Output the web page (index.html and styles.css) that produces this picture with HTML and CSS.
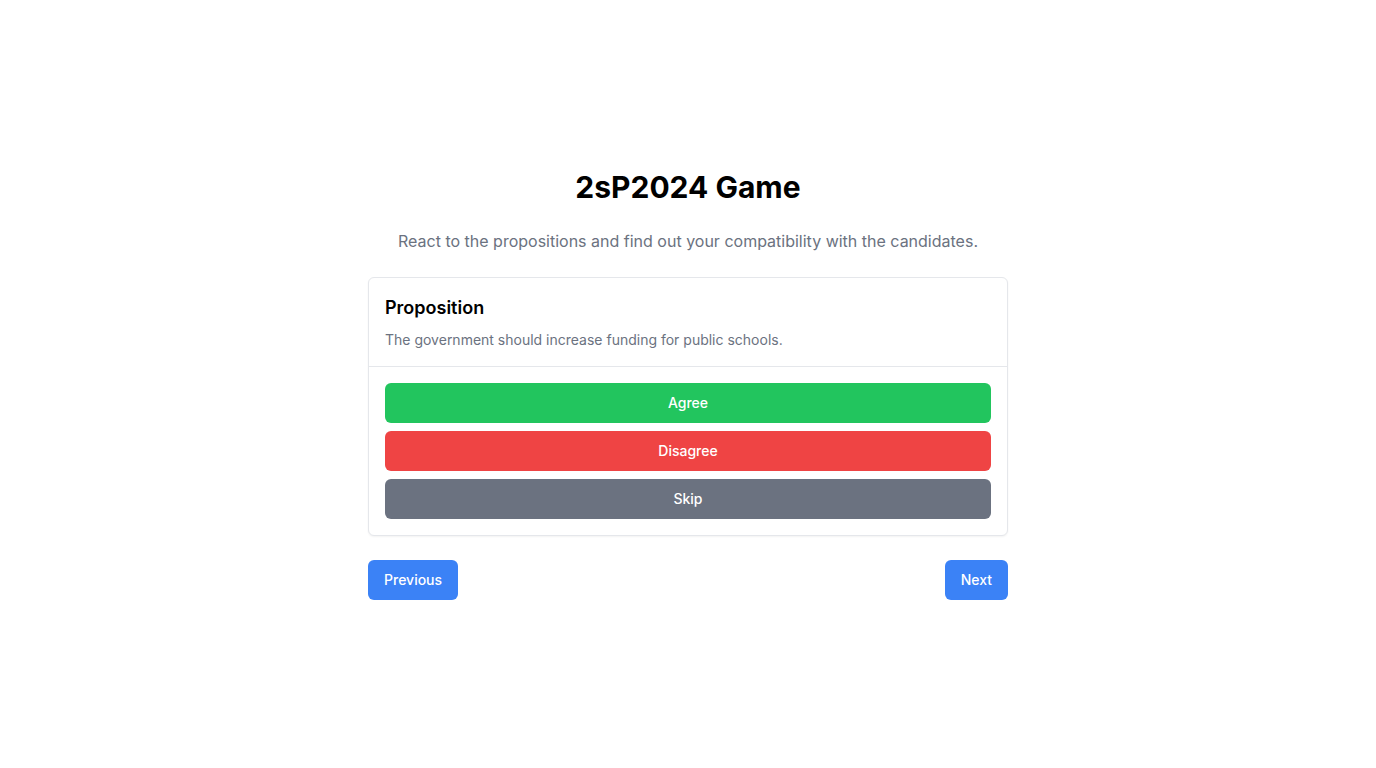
FILE: index.html
```html
<!DOCTYPE html>
<html lang="en">
<head>
<meta charset="utf-8">
<title>2sP2024 Game</title>
<link rel="stylesheet" href="styles.css">
</head>
<body>
<main class="page">
  <div class="container">
    <h1 class="title">2sP2024 Game</h1>
    <p class="subtitle">React to the propositions and find out your compatibility with the candidates.</p>
    <section class="card">
      <div class="card-header">
        <h2 class="card-title">Proposition</h2>
        <p class="card-desc">The government should increase funding for public schools.</p>
      </div>
      <div class="card-body">
        <button class="btn btn-agree">Agree</button>
        <button class="btn btn-disagree">Disagree</button>
        <button class="btn btn-skip">Skip</button>
      </div>
    </section>
    <div class="nav">
      <button class="nav-btn">Previous</button>
      <button class="nav-btn">Next</button>
    </div>
  </div>
</main>
</body>
</html>
```
FILE: styles.css
```css
* { box-sizing: border-box; }
html, body { margin: 0; padding: 0; background: #fff; }
body { font-family: Inter, "Noto Sans", sans-serif; color: #000; }
.page {
  min-height: 768px;
  display: flex;
  align-items: center;
  justify-content: center;
}
.container { width: 640px; display: flex; flex-direction: column; }
.title {
  margin: 0 0 24px;
  font-size: 30px;
  line-height: 36px;
  font-weight: 700;
  text-align: center;
}
.subtitle {
  margin: 0 0 24px;
  font-size: 16px;
  line-height: 24px;
  color: #6b7280;
  text-align: center;
}
.card {
  border: 1px solid #e5e7eb;
  border-radius: 6px;
  box-shadow: 0 1px 2px rgba(0,0,0,0.05);
  background: #fff;
}
.card-header {
  padding: 16px;
  border-bottom: 1px solid #e5e7eb;
}
.card-title {
  margin: 0 0 8px;
  font-size: 18px;
  line-height: 28px;
  font-weight: 600;
}
.card-desc {
  margin: 0;
  font-size: 14px;
  line-height: 20px;
  color: #6b7280;
}
.card-body {
  padding: 16px;
  display: flex;
  flex-direction: column;
  gap: 8px;
}
.btn, .nav-btn {
  font-family: inherit;
  font-size: 14px;
  font-weight: 500;
  color: #fff;
  border: none;
  border-radius: 6px;
  height: 40px;
  cursor: pointer;
}
.btn { width: 100%; }
.btn-agree { background: #22c55e; }
.btn-disagree { background: #ef4444; }
.btn-skip { background: #6b7280; }
.nav {
  margin-top: 24px;
  display: flex;
  justify-content: space-between;
}
.nav-btn { background: #3b82f6; padding: 0 16px; }
```
